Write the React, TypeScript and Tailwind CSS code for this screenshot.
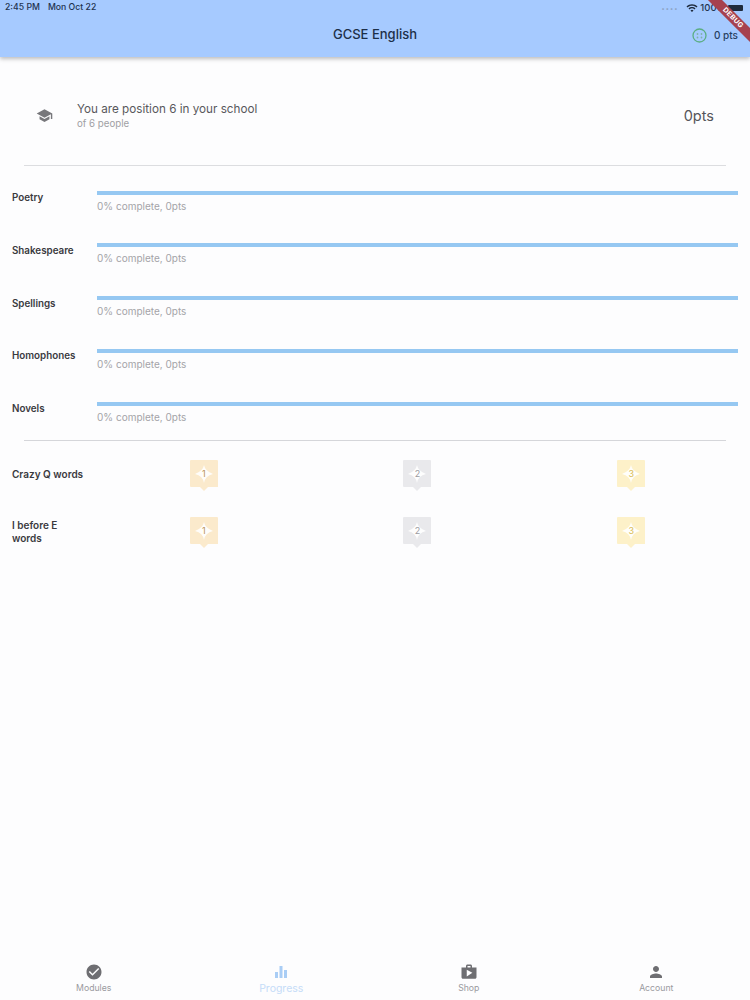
import React from "react";
import { MdSchool, MdCheckCircle, MdShop, MdPerson, MdWifi } from "react-icons/md";

const topics = ["Poetry", "Shakespeare", "Spellings", "Homophones", "Novels"];

const quizzes = ["Crazy Q words", "I before E words"];

const medals = [
  { n: "1", fill: "#fbeacc", text: "#b8935a" },
  { n: "2", fill: "#e9e9ec", text: "#9a9a9f" },
  { n: "3", fill: "#fdf1c9", text: "#d8bc55" },
];

function Medal({ n, fill, text }: { n: string; fill: string; text: string }) {
  return (
    <div className="grid h-[32px] w-[28px] place-items-center">
      <svg className="col-start-1 row-start-1" width="28" height="32" viewBox="0 0 28 32">
        <path d="M1 0H27Q28 0 28 1V27H18L14 31L10 27H1Q0 27 0 26V1Q0 0 1 0Z" fill={fill} />
        <path d="M14 5Q15 11 23 14Q15 16 14 23Q13 16 5 14Q13 11 14 5Z" fill="#ffffff" opacity="0.9" />
      </svg>
      <span className="col-start-1 row-start-1 mb-[4px] text-[9px]" style={{ color: text }}>
        {n}
      </span>
    </div>
  );
}

function NavItem({ label, active, icon }: { label: string; active?: boolean; icon: React.ReactNode }) {
  return (
    <div className="flex flex-col items-center">
      <div className={active ? "text-[#a9cdf5]" : "text-[#6e6e72]"}>{icon}</div>
      <span className={active ? "mt-[1px] text-[10.5px] leading-[13px] text-[#c5dcf8]" : "mt-[1px] text-[8.7px] leading-[13px] text-[#9a9a9e]"}>
        {label}
      </span>
    </div>
  );
}

export default function App() {
  return (
    <div className="relative flex h-[1000px] w-[750px] flex-col overflow-hidden bg-[#fdfdfe] font-['Inter',sans-serif]">
      {/* App bar with the status bar inside */}
      <header className="h-[57px] bg-[#a6caff] px-[4px] shadow-[0_2px_4px_rgba(0,0,0,0.25)]">
        <div className="flex h-[15px] items-center justify-between pt-[1px] text-[8.7px] font-medium text-[#1f3350]">
          <span className="flex gap-[8px] pl-[1px]">
            <span>2:45 PM</span>
            <span>Mon Oct 22</span>
          </span>
          <span className="flex items-center gap-[2px] pr-[3px]">
            <span className="mr-[6px] text-[6px] tracking-[1px] text-[#8aa0c0]">••••</span>
            <MdWifi size={12} className="text-[#1d2a3d]" />
            <span className="text-[9.5px]">100%</span>
            <span className="h-[6px] w-[15px] rounded-[1px] bg-[#1d2a3d]" />
          </span>
        </div>
        <div className="relative mt-[2px] flex h-[36px] items-center justify-center">
          <h1 className="text-[13px] font-medium text-[#1d2f48]">GCSE English</h1>
          <div className="absolute right-[8px] flex items-center gap-[7px]">
            <svg width="15" height="15" viewBox="0 0 15 15" fill="none">
              <circle cx="7.5" cy="7.5" r="6.5" stroke="#5cae84" strokeWidth="1.3" />
              <circle cx="5.5" cy="6" r="0.9" fill="#7fb3a8" />
              <circle cx="9.5" cy="6" r="0.9" fill="#7fb3a8" />
              <circle cx="5.5" cy="9.5" r="0.9" fill="#7fb3a8" />
              <circle cx="9.5" cy="9.5" r="0.9" fill="#7fb3a8" />
            </svg>
            <span className="text-[10px] font-medium text-[#27405f]">0 pts</span>
          </div>
        </div>
      </header>

      {/* Debug banner */}
      <div className="absolute right-[-18px] top-[13px] flex h-[10px] w-[70px] rotate-45 items-center justify-center bg-[#a6414f] text-[7px] font-bold tracking-[0.3px] text-white">
        DEBUG
      </div>

      <main className="flex-1">
        {/* School position */}
        <section className="flex h-[108px] items-center justify-between pl-[36px] pr-[36px] pt-[9px]">
          <div className="flex items-center">
            <MdSchool size={17} className="text-[#77777b]" />
            <div className="ml-[24px]">
              <p className="text-[11.7px] leading-[16px] text-[#58585c]">You are position 6 in your school</p>
              <p className="text-[9.7px] leading-[13px] text-[#a0a0a4]">of 6 people</p>
            </div>
          </div>
          <span className="text-[14.5px] text-[#55555a]">0pts</span>
        </section>

        <hr className="mx-[24px] border-[#dcdde0]" />

        {/* Topic progress */}
        <section className="flex flex-col pl-[12px] pr-[12px] pt-[24.5px]">
          {topics.map((topic) => (
            <div key={topic} className="flex h-[52.75px]">
              <div className="w-[85px] pt-[0.5px] text-[9.8px] font-semibold leading-[13px] text-[#3a3a3e]">{topic}</div>
              <div className="flex-1">
                <div className="h-[4px] bg-[#96c8f2]" />
                <p className="mt-[4px] text-[10px] leading-[14px] text-[#a4a4a8]">0% complete, 0pts</p>
              </div>
            </div>
          ))}
        </section>

        <hr className="mx-[24px] mt-[-14.5px] border-[#d5d6da]" />

        {/* Quiz medals */}
        <section className="flex flex-col gap-[25px] pl-[12px] pr-[12px] pt-[19px]">
          {quizzes.map((quiz) => (
            <div key={quiz} className="flex h-[32px] items-center">
              <div className="mb-[2px] w-[85px] pr-[11px] text-[10px] font-semibold leading-[13px] text-[#3a3a3e]">{quiz}</div>
              <div className="grid flex-1 grid-cols-3 justify-items-center">
                {medals.map((m) => (
                  <Medal key={m.n} {...m} />
                ))}
              </div>
            </div>
          ))}
        </section>
      </main>

      {/* Bottom navigation */}
      <nav className="mb-[1px] grid h-[36px] grid-cols-4">
        <NavItem label="Modules" icon={<MdCheckCircle size={18} />} />
        <NavItem
          label="Progress"
          active
          icon={
            <svg width="18" height="18" viewBox="0 0 18 18" fill="currentColor">
              <rect x="3" y="9" width="3" height="6" />
              <rect x="7.5" y="3" width="3" height="12" />
              <rect x="12" y="7" width="3" height="8" />
            </svg>
          }
        />
        <NavItem label="Shop" icon={<MdShop size={18} />} />
        <NavItem label="Account" icon={<MdPerson size={18} />} />
      </nav>
    </div>
  );
}
